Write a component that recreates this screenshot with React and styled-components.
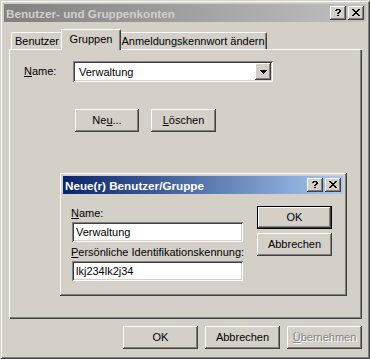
import React from "react";
import styled, { createGlobalStyle, css } from "styled-components";

const FACE = "#d4d0c8";

const GlobalStyle = createGlobalStyle`
  html, body {
    margin: 0;
    padding: 0;
    background: ${FACE};
  }
  body {
    font-family: "Liberation Sans", Arial, sans-serif;
    font-size: 11px;
    color: #000;
  }
  * {
    box-sizing: border-box;
  }
`;

// pixel glyphs as in the classic caption buttons
const QUESTION = [
  ".XXXX.",
  "XX..XX",
  "....XX",
  "...XX.",
  "..XX..",
  "......",
  "..XX..",
];
const CLOSE = [
  "XX....XX",
  ".XX..XX.",
  "..XXXX..",
  "...XX...",
  "..XXXX..",
  ".XX..XX.",
  "XX....XX",
];
const ARROW = ["XXXXXXX", ".XXXXX.", "..XXX..", "...X..."];

function PixelIcon({ rows, color = "#000" }) {
  const w = rows[0].length;
  const h = rows.length;
  const rects = [];
  rows.forEach((row, y) => {
    [...row].forEach((c, x) => {
      if (c === "X") rects.push(<rect key={`${x}-${y}`} x={x} y={y} width="1" height="1" />);
    });
  });
  return (
    <svg width={w} height={h} viewBox={`0 0 ${w} ${h}`} fill={color} shapeRendering="crispEdges">
      {rects}
    </svg>
  );
}

const raised = css`
  background: ${FACE};
  box-shadow: inset -1px -1px #404040, inset 1px 1px #fff, inset -2px -2px #808080,
    inset 2px 2px ${FACE};
`;

const sunken = css`
  background: #fff;
  box-shadow: inset 1px 1px #808080, inset -1px -1px #fff, inset 2px 2px #404040,
    inset -2px -2px ${FACE};
`;

const Window = styled.div`
  position: relative;
  width: 370px;
  height: 359px;
  padding: 4px;
  display: flex;
  flex-direction: column;
  background: ${FACE};
  box-shadow: inset 1px 1px ${FACE}, inset -1px -1px #404040, inset 2px 2px #fff,
    inset -2px -2px #808080;
`;

const TitleBar = styled.div`
  display: flex;
  align-items: center;
  height: 18px;
  flex-shrink: 0;
  padding: 0 2px 0 2px;
  font-weight: bold;
  font-size: 11.7px;
  white-space: nowrap;
  color: ${(p) => (p.$active ? "#fff" : FACE)};
  background: ${(p) =>
    p.$active
      ? "linear-gradient(to right, #0a246a, #a6caf0)"
      : "linear-gradient(to right, #808080, #c0c0c0)"};
`;

const Caption = styled.span`
  flex: 1;
  overflow: hidden;
`;

const CaptionButtons = styled.div`
  display: flex;
  gap: 2px;
`;

const CaptionButton = styled.div`
  ${raised};
  width: 16px;
  height: 14px;
  display: flex;
  align-items: center;
  justify-content: center;
  padding-bottom: 1px;
`;

const Content = styled.div`
  flex: 1;
  display: flex;
  flex-direction: column;
  padding: 7px 4px 0 5px;
`;

const TabStrip = styled.div`
  display: flex;
  align-items: flex-end;
  height: 20px;
  padding-left: 2px;
  position: relative;
  z-index: 1;
`;

const Tab = styled.div`
  width: ${(p) => p.$w}px;
  height: ${(p) => (p.$selected ? 21 : 17)}px;
  margin: ${(p) => (p.$selected ? "0 -2px -1px -2px" : "0")};
  padding-top: ${(p) => (p.$selected ? 3 : 2)}px;
  text-align: center;
  background: ${FACE};
  border: 1px solid;
  border-color: #fff #404040 transparent #fff;
  border-bottom: none;
  border-radius: 2px 2px 0 0;
  box-shadow: inset -1px 0 #808080;
  white-space: nowrap;
  position: relative;
  z-index: ${(p) => (p.$selected ? 2 : 1)};
`;

const Panel = styled.div`
  height: 270px;
  padding: 12px 0 0 15px;
  background: ${FACE};
  box-shadow: inset 1px 1px #fff, inset -1px -1px #404040, inset -2px -2px #808080;
`;

const FieldRow = styled.div`
  display: flex;
  align-items: center;
`;

const Label = styled.label`
  display: block;
  width: ${(p) => (p.$w ? `${p.$w}px` : "auto")};
  line-height: 13px;
  white-space: nowrap;
`;

const Combo = styled.div`
  ${sunken};
  width: 200px;
  height: 21px;
  padding: 2px 2px 2px 6px;
  display: flex;
  align-items: center;
`;

const ComboText = styled.span`
  flex: 1;
`;

const DropButton = styled.div`
  ${raised};
  width: 16px;
  height: 17px;
  display: flex;
  align-items: center;
  justify-content: center;
`;

const ButtonRow = styled.div`
  display: flex;
  gap: ${(p) => p.$gap}px;
  margin: ${(p) => p.$margin};
  justify-content: ${(p) => p.$justify || "flex-start"};
`;

const Button = styled.div`
  ${raised};
  width: ${(p) => p.$w || 75}px;
  height: 23px;
  display: flex;
  align-items: center;
  justify-content: center;
  padding-bottom: 1px;
  white-space: nowrap;
  color: ${(p) => (p.$disabled ? "#808080" : "#000")};
  text-shadow: ${(p) => (p.$disabled ? "1px 1px #fff" : "none")};
  ${(p) =>
    p.$default &&
    css`
      box-shadow: inset 0 0 0 1px #000, inset -2px -2px #404040, inset 2px 2px #fff,
        inset -3px -3px #808080;
    `}
`;

const Dialog = styled.div`
  position: absolute;
  left: 59px;
  top: 172px;
  width: 288px;
  height: 124px;
  padding: 4px;
  background: ${FACE};
  box-shadow: inset 1px 1px ${FACE}, inset -1px -1px #404040, inset 2px 2px #fff,
    inset -2px -2px #808080;
  z-index: 5;
`;

const DialogBody = styled.div`
  display: flex;
  gap: 14px;
  padding: 12px 0 0 8px;
`;

const FieldColumn = styled.div`
  width: 172px;
  padding-top: 1px;
  display: flex;
  flex-direction: column;
`;

const Edit = styled.div`
  ${sunken};
  height: 20px;
  margin: 2px 0 0 1px;
  padding: 0 4px;
  display: flex;
  align-items: center;
`;

const SecondLabel = styled(Label)`
  margin-top: 4px;
`;

const ButtonColumn = styled.div`
  display: flex;
  flex-direction: column;
  gap: 4px;
`;

function TitleButtons() {
  return (
    <CaptionButtons>
      <CaptionButton>
        <PixelIcon rows={QUESTION} />
      </CaptionButton>
      <CaptionButton>
        <PixelIcon rows={CLOSE} />
      </CaptionButton>
    </CaptionButtons>
  );
}

export default function App() {
  return (
    <>
      <GlobalStyle />
      <Window>
        <TitleBar>
          <Caption>Benutzer- und Gruppenkonten</Caption>
          <TitleButtons />
        </TitleBar>
        <Content>
          <TabStrip>
            <Tab $w={52}>Benutzer</Tab>
            <Tab $w={60} $selected>
              Gruppen
            </Tab>
            <Tab $w={148}>Anmeldungskennwort ändern</Tab>
          </TabStrip>
          <Panel>
            <FieldRow>
              <Label $w={49}>
                <u>N</u>ame:
              </Label>
              <Combo>
                <ComboText>Verwaltung</ComboText>
                <DropButton>
                  <PixelIcon rows={ARROW} />
                </DropButton>
              </Combo>
            </FieldRow>
            <ButtonRow $gap={12} $margin="27px 0 0 51px">
              <Button $w={64}>
                Ne<u>u</u>...
              </Button>
              <Button $w={65}>
                <u>L</u>öschen
              </Button>
            </ButtonRow>
          </Panel>
          <ButtonRow $gap={7} $margin="7px 0 0 0" $justify="flex-end">
            <Button>OK</Button>
            <Button>Abbrechen</Button>
            <Button $disabled>
              <u>Ü</u>bernehmen
            </Button>
          </ButtonRow>
        </Content>

        <Dialog>
          <TitleBar $active>
            <Caption>Neue(r) Benutzer/Gruppe</Caption>
            <TitleButtons />
          </TitleBar>
          <DialogBody>
            <FieldColumn>
              <Label>
                <u>N</u>ame:
              </Label>
              <Edit>Verwaltung</Edit>
              <SecondLabel>
                <u>P</u>ersönliche Identifikationskennung:
              </SecondLabel>
              <Edit>lkj234lk2j34</Edit>
            </FieldColumn>
            <ButtonColumn>
              <Button $default>OK</Button>
              <Button>Abbrechen</Button>
            </ButtonColumn>
          </DialogBody>
        </Dialog>
      </Window>
    </>
  );
}
